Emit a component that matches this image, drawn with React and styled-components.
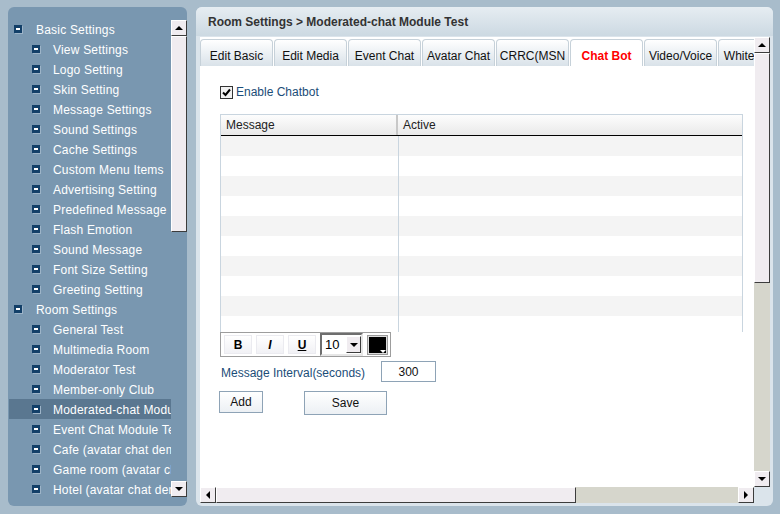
import React from "react";
import styled, { createGlobalStyle, css } from "styled-components";

const GlobalStyle = createGlobalStyle`
  html, body {
    margin: 0;
    padding: 0;
    background: #a8bccb;
    font-family: "Liberation Sans", Arial, sans-serif;
    font-size: 12px;
  }
`;

const Page = styled.div`
  display: flex;
  gap: 9px;
  padding: 7px 7px 8px 8px;
  width: 780px;
  height: 514px;
  box-sizing: border-box;
`;

/* ---------- left tree ---------- */

const SidePanel = styled.div`
  width: 179px;
  height: 499px;
  background: #7997b0;
  border-radius: 6px;
  display: flex;
  overflow: hidden;
`;

const TreeList = styled.ul`
  list-style: none;
  margin: 0 0 0 1px;
  padding: 12px 0 0;
  width: 162px;
  overflow: hidden;
`;

const TreeRow = styled.li`
  display: flex;
  align-items: center;
  height: 20px;
  padding-top: 1px;
  box-sizing: border-box;
  padding-left: ${(p) => (p.$child ? "23px" : "5px")};
  gap: ${(p) => (p.$child ? "13px" : "14px")};
  color: #fff;
  letter-spacing: 0.2px;
  white-space: nowrap;
  background: ${(p) => (p.$selected ? "#5a7790" : "transparent")};
`;

const Minus = styled.span`
  position: relative;
  flex: none;
  width: 8px;
  height: 8px;
  margin-top: -2px;
  background: #123f68;
  box-shadow: 1px 1px 0 #9db4c8;
  &::after {
    content: "";
    position: absolute;
    left: 2px;
    top: 3px;
    width: 4px;
    height: 2px;
    background: #fff;
  }
`;

const ScrollCol = styled.div`
  width: 16px;
  display: flex;
  flex-direction: column;
  margin-top: ${(p) => p.$top || 0};
  height: ${(p) => p.$height || "auto"};
`;

const ScrollRow = styled.div`
  display: flex;
  height: 16px;
`;

const bevel = css`
  box-sizing: border-box;
  background: #f0ecf0;
  border-top: 1px solid #fff;
  border-left: 1px solid #fff;
  border-right: 1px solid #3c3c3c;
  border-bottom: 1px solid #3c3c3c;
`;

const ArrowBtn = styled.div`
  ${bevel};
  flex: none;
  width: 16px;
  height: 16px;
  display: flex;
  align-items: center;
  justify-content: center;
`;

const Thumb = styled.div`
  ${bevel};
  flex: none;
  width: ${(p) => (p.$w ? p.$w : "16px")};
  height: ${(p) => (p.$h ? p.$h : "16px")};
`;

const Track = styled.div`
  flex: 1;
  background: ${(p) => p.$bg || "transparent"};
`;

function Arrow({ dir }) {
  const pts = {
    up: "0,5 8,5 4,1",
    down: "0,1 8,1 4,5",
    left: "5,0 5,8 1,4",
    right: "1,0 1,8 5,4",
  }[dir];
  const vertical = dir === "up" || dir === "down";
  return (
    <svg width={vertical ? 8 : 6} height={vertical ? 6 : 8} viewBox={vertical ? "0 0 8 6" : "0 0 6 8"}>
      <polygon points={pts} fill="#000" />
    </svg>
  );
}

/* ---------- right panel ---------- */

const MainPanel = styled.div`
  width: 577px;
  height: 499px;
  background: #dbe4eb;
  border-radius: 6px;
  display: flex;
  flex-direction: column;
  overflow: hidden;
`;

const Header = styled.div`
  height: 29px;
  flex: none;
  display: flex;
  align-items: center;
  padding-left: 12px;
  font-weight: bold;
  color: #333;
  background: linear-gradient(#e6edf2, #ccd9e2);
`;

const Frame = styled.div`
  margin: 1px 3px 3px 4px;
  height: 466px;
  display: grid;
  grid-template-columns: 554px 16px;
  grid-template-rows: 450px 16px;
`;

const Content = styled.div`
  background: #fff;
  overflow: hidden;
`;

const Tabs = styled.div`
  display: flex;
  gap: 1px;
  padding-top: 2px;
  height: 27px;
  white-space: nowrap;
`;

const Tab = styled.div`
  flex: none;
  width: 73px;
  box-sizing: border-box;
  height: 27px;
  display: flex;
  align-items: center;
  justify-content: center;
  padding-top: 6px;
  overflow: hidden;
  border: 1px solid #c6d1d9;
  border-bottom: none;
  border-radius: 4px 4px 0 0;
  background: ${(p) => (p.$active ? "#fff" : "linear-gradient(#ffffff, #d9e2e9)")};
  color: ${(p) => (p.$active ? "#f00" : "#111")};
  font-weight: ${(p) => (p.$active ? "bold" : "normal")};
`;

const Body = styled.div`
  padding: 20px 11px 0 20px;
`;

const CheckRow = styled.label`
  display: flex;
  align-items: center;
  gap: 3px;
  color: #1b4d78;
  height: 13px;
  line-height: 15px;
`;

const CheckBox = styled.span`
  width: 13px;
  height: 13px;
  box-sizing: border-box;
  border: 1px solid #333;
  background: #f2f2f2;
  display: flex;
  align-items: center;
  justify-content: center;
`;

const Table = styled.div`
  margin-top: 15px;
  width: 523px;
  border: 1px solid #c9d5df;
  border-bottom: none;
  box-sizing: border-box;
`;

const HeadRow = styled.div`
  display: flex;
  height: 20px;
  border-bottom: 1px solid #000;
  background: linear-gradient(#fdfdfd, #e9e9e9);
  color: #222;
`;

const HeadCell = styled.div`
  width: ${(p) => p.$w || "auto"};
  flex: ${(p) => (p.$w ? "none" : 1)};
  display: flex;
  align-items: center;
  padding-left: 5px;
  box-sizing: border-box;
  border-right: ${(p) => (p.$w ? "2px solid #c8c8c8" : "none")};
`;

const TableBody = styled.div`
  height: 196px;
  overflow: hidden;
`;

const BodyRow = styled.div`
  display: flex;
  height: 20px;
  background: ${(p) => (p.$odd ? "#f4f4f4" : "#fff")};
`;

const BodyCell = styled.div`
  width: ${(p) => p.$w || "auto"};
  flex: ${(p) => (p.$w ? "none" : 1)};
  border-right: ${(p) => (p.$w ? "1px solid #c9d5df" : "none")};
`;

const Toolbar = styled.div`
  width: 171px;
  height: 25px;
  box-sizing: border-box;
  border: 1px solid #9d9d9d;
  display: flex;
  align-items: center;
  gap: 4px;
  padding-left: 3px;
`;

const FmtBtn = styled.div`
  width: 28px;
  height: 19px;
  box-sizing: border-box;
  border: 1px solid #ebebf0;
  background: linear-gradient(#ffffff, #f1f1f5);
  display: flex;
  align-items: center;
  justify-content: center;
  font-weight: bold;
  font-size: 12px;
  font-style: ${(p) => (p.$italic ? "italic" : "normal")};
  text-decoration: ${(p) => (p.$under ? "underline" : "none")};
`;

const SizeSelect = styled.div`
  width: 43px;
  height: 23px;
  box-sizing: border-box;
  border: 2px solid;
  border-color: #6e6e6e #e6e6e6 #e6e6e6 #6e6e6e;
  background: #fff;
  display: flex;
  align-items: center;
  justify-content: space-between;
  padding-left: 3px;
  font-size: 13px;
`;

const SelectBtn = styled(ArrowBtn)`
  width: 15px;
  height: 17px;
`;

const Swatch = styled.div`
  position: relative;
  width: 21px;
  height: 20px;
  box-sizing: border-box;
  border: 1px solid #9a9a9a;
  background: #ddd;
  padding: 1px;
  &::before {
    content: "";
    display: block;
    width: 100%;
    height: 100%;
    background: #000;
  }
  &::after {
    content: "";
    position: absolute;
    right: 1px;
    bottom: 1px;
    border-left: 3px solid transparent;
    border-right: 3px solid transparent;
    border-top: 3px solid #fff;
  }
`;

const FieldRow = styled.div`
  display: flex;
  align-items: center;
  margin-top: 4px;
  height: 21px;
`;

const FieldLabel = styled.span`
  width: 161px;
  padding: 2px 0 0 1px;
  box-sizing: border-box;
  color: #1b4d78;
`;

const NumInput = styled.div`
  width: 55px;
  height: 21px;
  box-sizing: border-box;
  border: 1px solid #8ea3b6;
  display: flex;
  align-items: center;
  justify-content: center;
  color: #111;
`;

const ButtonRow = styled.div`
  display: flex;
  align-items: flex-start;
  gap: 41px;
  margin-top: 9px;
  margin-left: -1px;
`;

const Button = styled.div`
  width: ${(p) => p.$w};
  height: ${(p) => p.$h};
  box-sizing: border-box;
  border: 1px solid #8ea3b6;
  background: linear-gradient(#ffffff, #ecf0f4);
  display: flex;
  align-items: center;
  justify-content: center;
  color: #111;
`;

const Corner = styled.div`
  background: #dbe4eb;
`;

const basic = [
  "View Settings",
  "Logo Setting",
  "Skin Setting",
  "Message Settings",
  "Sound Settings",
  "Cache Settings",
  "Custom Menu Items",
  "Advertising Setting",
  "Predefined Message",
  "Flash Emotion",
  "Sound Message",
  "Font Size Setting",
  "Greeting Setting",
];

const rooms = [
  "General Test",
  "Multimedia Room",
  "Moderator Test",
  "Member-only Club",
  "Moderated-chat Module Test",
  "Event Chat Module Test",
  "Cafe (avatar chat demo)",
  "Game room (avatar chat demo)",
  "Hotel (avatar chat demo)",
];

const tabs = ["Edit Basic", "Edit Media", "Event Chat", "Avatar Chat", "CRRC(MSN", "Chat Bot", "Video/Voice", "Whiteboard"];

export default function App() {
  return (
    <>
      <GlobalStyle />
      <Page>
        <SidePanel>
          <TreeList>
            <TreeRow>
              <Minus />
              Basic Settings
            </TreeRow>
            {basic.map((t) => (
              <TreeRow key={t} $child>
                <Minus />
                {t}
              </TreeRow>
            ))}
            <TreeRow>
              <Minus />
              Room Settings
            </TreeRow>
            {rooms.map((t) => (
              <TreeRow key={t} $child $selected={t.startsWith("Moderated")}>
                <Minus />
                {t}
              </TreeRow>
            ))}
          </TreeList>
          <ScrollCol $top="13px" $height="477px">
            <ArrowBtn>
              <Arrow dir="up" />
            </ArrowBtn>
            <Thumb $h="196px" />
            <Track />
            <ArrowBtn>
              <Arrow dir="down" />
            </ArrowBtn>
          </ScrollCol>
        </SidePanel>

        <MainPanel>
          <Header>Room Settings &gt; Moderated-chat Module Test</Header>
          <Frame>
            <Content>
              <Tabs>
                {tabs.map((t) => (
                  <Tab key={t} $active={t === "Chat Bot"}>
                    {t}
                  </Tab>
                ))}
              </Tabs>
              <Body>
                <CheckRow>
                  <CheckBox>
                    <svg width="9" height="9" viewBox="0 0 9 9">
                      <path d="M1 4.5 L3.5 7 L8 1.5" stroke="#000" strokeWidth="2" fill="none" />
                    </svg>
                  </CheckBox>
                  Enable Chatbot
                </CheckRow>
                <Table>
                  <HeadRow>
                    <HeadCell $w="177px">Message</HeadCell>
                    <HeadCell>Active</HeadCell>
                  </HeadRow>
                  <TableBody>
                    {Array.from({ length: 10 }).map((_, i) => (
                      <BodyRow key={i} $odd={i % 2 === 0}>
                        <BodyCell $w="177px" />
                        <BodyCell />
                      </BodyRow>
                    ))}
                  </TableBody>
                </Table>
                <Toolbar>
                  <FmtBtn>B</FmtBtn>
                  <FmtBtn $italic>I</FmtBtn>
                  <FmtBtn $under>U</FmtBtn>
                  <SizeSelect>
                    10
                    <SelectBtn>
                      <Arrow dir="down" />
                    </SelectBtn>
                  </SizeSelect>
                  <Swatch />
                </Toolbar>
                <FieldRow>
                  <FieldLabel>Message Interval(seconds)</FieldLabel>
                  <NumInput>300</NumInput>
                </FieldRow>
                <ButtonRow>
                  <Button $w="44px" $h="22px">Add</Button>
                  <Button $w="83px" $h="24px">Save</Button>
                </ButtonRow>
              </Body>
            </Content>
            <ScrollCol>
              <ArrowBtn>
                <Arrow dir="up" />
              </ArrowBtn>
              <Thumb $h="230px" />
              <Track $bg="#d6d6cc" />
              <ArrowBtn>
                <Arrow dir="down" />
              </ArrowBtn>
            </ScrollCol>
            <ScrollRow>
              <ArrowBtn>
                <Arrow dir="left" />
              </ArrowBtn>
              <Thumb $w="360px" />
              <Track $bg="#d6d6cc" />
              <ArrowBtn>
                <Arrow dir="right" />
              </ArrowBtn>
            </ScrollRow>
            <Corner />
          </Frame>
        </MainPanel>
      </Page>
    </>
  );
}
